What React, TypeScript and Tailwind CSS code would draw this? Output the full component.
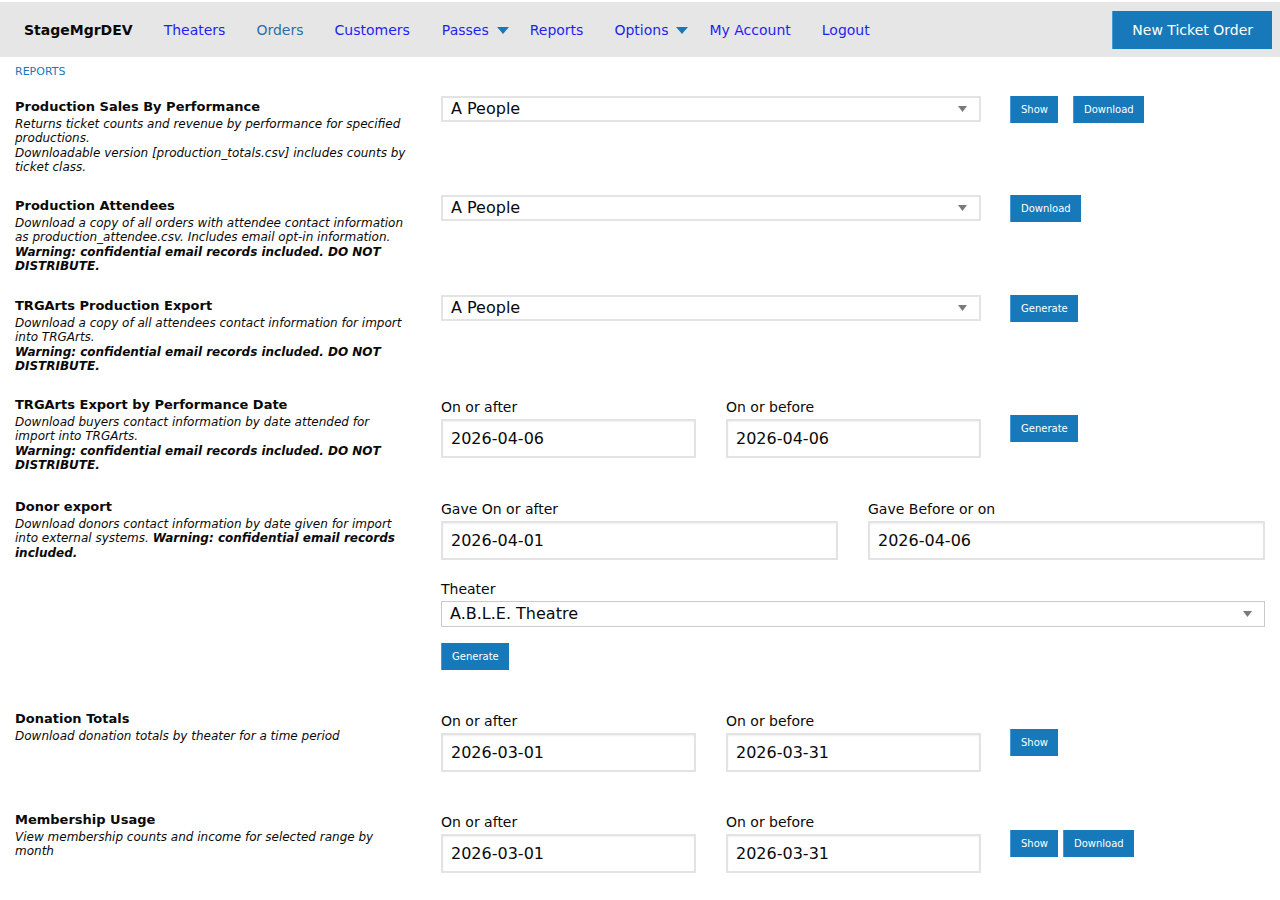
import React from "react";

const NAV = [
  { label: "Theaters", cls: "text-[#1f1fef]" },
  { label: "Orders", cls: "text-[#2b6fa8]" },
  { label: "Customers", cls: "text-[#1f1fef]" },
  { label: "Passes", cls: "text-[#1f1fef] ml-[1px]", dropdown: true },
  { label: "Reports", cls: "text-[#1f1fef]" },
  { label: "Options", cls: "text-[#1f1fef]", dropdown: true },
  { label: "My Account", cls: "text-[#1f1fef]" },
  { label: "Logout", cls: "text-[#1f1fef]" },
];

function Caret() {
  return (
    <svg width="12" height="7" viewBox="0 0 12 7" className="ml-[8px] mr-[-10px]">
      <path d="M0 0 L12 0 L6 7 Z" fill="#1779ba" />
    </svg>
  );
}

function Btn({ children }: { children: React.ReactNode }) {
  return (
    <button className="h-[27px] px-[10px] bg-[#1779ba] text-white text-[10px] leading-none border-l border-[#4b97cf]">
      {children}
    </button>
  );
}

function Select({ value, w, thin }: { value: string; w: string; thin?: boolean }) {
  return (
    <div
      className={`${w} h-[26px] flex items-center justify-between pl-[8px] pr-[12px] bg-white text-[16px] text-[#0a0a0a] ${
        thin ? "border border-[#cacaca]" : "border-2 border-[#e3e3e3]"
      }`}
    >
      <span>{value}</span>
      <svg width="9" height="6" viewBox="0 0 9 6">
        <path d="M0 0 L9 0 L4.5 6 Z" fill="#7a7a7a" />
      </svg>
    </div>
  );
}

function DateField({ label, value, w }: { label: string; value: string; w: string }) {
  return (
    <div className={w}>
      <div className="text-[14px] leading-[17px] text-[#0a0a0a] mb-[3px]">{label}</div>
      <div className="h-[39px] border-2 border-[#e3e3e3] flex items-center pl-[8px] text-[16px] text-[#0a0a0a] bg-white shadow-[inset_0_1px_2px_rgba(10,10,10,0.06)]">
        {value}
      </div>
    </div>
  );
}

function Section({
  title,
  h,
  children,
  right,
}: {
  title: string;
  h: string;
  children: React.ReactNode;
  right: React.ReactNode;
}) {
  return (
    <div className={`flex ${h}`}>
      <div className="w-[426px] pl-[15px] pr-[14px] pt-[3px]">
        <div className="text-[13px] leading-[16px] font-bold text-[#0a0a0a]">{title}</div>
        <div className="mt-[2px] text-[12px] leading-[14.4px] italic text-[#0a0a0a]">{children}</div>
      </div>
      <div className="flex-1 pl-[15px] pr-[15px]">{right}</div>
    </div>
  );
}

export default function App() {
  return (
    <div className="min-h-screen bg-white" style={{ fontFamily: "'DejaVu Sans', Verdana, sans-serif" }}>
      <div className="mt-[2px] h-[55px] bg-[#e6e6e6] flex items-center">
        <div className="pl-[24px] pt-[2px] text-[14px] font-bold text-[#0a0a0a]">StageMgrDEV</div>
        <nav className="flex items-center pt-[2px] ml-[31px] gap-[31px] text-[14px]">
          {NAV.map((n) => (
            <div key={n.label} className={`flex items-center ${n.cls}`}>
              <span>{n.label}</span>
              {n.dropdown && <Caret />}
            </div>
          ))}
        </nav>
        <button className="ml-auto mr-[8px] h-[38px] px-[19px] pt-[2px] bg-[#1779ba] text-white text-[14px] border-l border-[#4b97cf]">
          New Ticket Order
        </button>
      </div>

      <div className="pl-[15px] pt-[8px] text-[11px] leading-[13px] text-[#1779ba]">REPORTS</div>

      <div className="mt-[18px]">
        <Section
          title="Production Sales By Performance"
          h="h-[99px]"
          right={
            <div className="flex">
              <Select value="A People" w="w-[540px]" />
              <div className="ml-[29px] flex gap-[15px]">
                <Btn>Show</Btn>
                <Btn>Download</Btn>
              </div>
            </div>
          }
        >
          Returns ticket counts and revenue by performance for specified productions.
          <br />
          Downloadable version [production_totals.csv] includes counts by ticket class.
        </Section>

        <Section
          title="Production Attendees"
          h="h-[100px]"
          right={
            <div className="flex">
              <Select value="A People" w="w-[540px]" />
              <div className="ml-[29px] flex">
                <Btn>Download</Btn>
              </div>
            </div>
          }
        >
          Download a copy of all orders with attendee contact information as production_attendee.csv. Includes email
          opt-in information.
          <br />
          <b>Warning: confidential email records included. DO NOT DISTRIBUTE.</b>
        </Section>

        <Section
          title="TRGArts Production Export"
          h="h-[99px]"
          right={
            <div className="flex">
              <Select value="A People" w="w-[540px]" />
              <div className="ml-[29px] flex">
                <Btn>Generate</Btn>
              </div>
            </div>
          }
        >
          Download a copy of all attendees contact information for import into TRGArts.
          <br />
          <b>Warning: confidential email records included. DO NOT DISTRIBUTE.</b>
        </Section>

        <Section
          title="TRGArts Export by Performance Date"
          h="h-[102px]"
          right={
            <div className="flex pt-[5px]">
              <DateField label="On or after" value="2026-04-06" w="w-[255px]" />
              <DateField label="On or before" value="2026-04-06" w="w-[255px] ml-[30px]" />
              <div className="ml-[29px] pt-[16px] flex">
                <Btn>Generate</Btn>
              </div>
            </div>
          }
        >
          Download buyers contact information by date attended for import into TRGArts.
          <br />
          <b>Warning: confidential email records included. DO NOT DISTRIBUTE.</b>
        </Section>

        <Section
          title="Donor export"
          h="h-[212px]"
          right={
            <div className="pt-[5px]">
              <div className="flex">
                <DateField label="Gave On or after" value="2026-04-01" w="w-[397px]" />
                <DateField label="Gave Before or on" value="2026-04-06" w="w-[397px] ml-[30px]" />
              </div>
              <div className="mt-[21px] text-[14px] leading-[17px] text-[#0a0a0a] mb-[3px]">Theater</div>
              <Select value="A.B.L.E. Theatre" w="w-full" thin />
              <div className="mt-[16px] flex">
                <Btn>Generate</Btn>
              </div>
            </div>
          }
        >
          Download donors contact information by date given for import into external systems.{" "}
          <b>Warning: confidential email records included.</b>
        </Section>

        <Section
          title="Donation Totals"
          h="h-[101px]"
          right={
            <div className="flex pt-[5px]">
              <DateField label="On or after" value="2026-03-01" w="w-[255px]" />
              <DateField label="On or before" value="2026-03-31" w="w-[255px] ml-[30px]" />
              <div className="ml-[29px] pt-[16px] flex">
                <Btn>Show</Btn>
              </div>
            </div>
          }
        >
          Download donation totals by theater for a time period
        </Section>

        <Section
          title="Membership Usage"
          h="h-[90px]"
          right={
            <div className="flex pt-[5px]">
              <DateField label="On or after" value="2026-03-01" w="w-[255px]" />
              <DateField label="On or before" value="2026-03-31" w="w-[255px] ml-[30px]" />
              <div className="ml-[29px] pt-[16px] flex gap-[5px]">
                <Btn>Show</Btn>
                <Btn>Download</Btn>
              </div>
            </div>
          }
        >
          View membership counts and income for selected range by month
        </Section>
      </div>
    </div>
  );
}
